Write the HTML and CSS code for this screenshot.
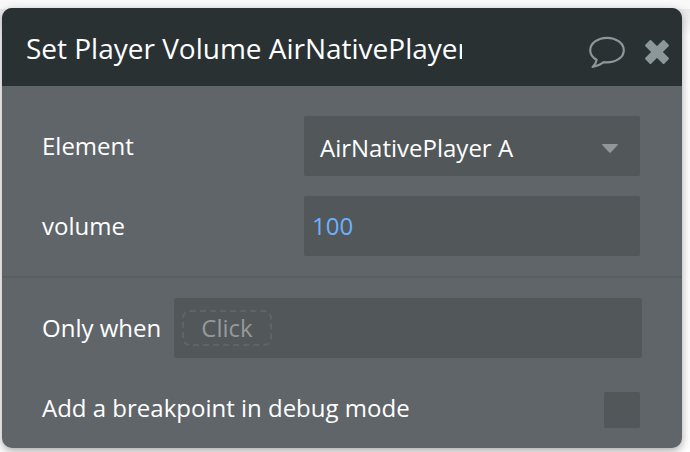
FILE: index.html
```html
<!DOCTYPE html>
<html lang="en">
<head>
  <meta charset="UTF-8" />
  <meta name="viewport" content="width=device-width, initial-scale=1" />
  <title>Set Player Volume</title>
  <link rel="stylesheet" href="styles.css">
</head>
<body>

  <div class="panel">
    <div class="header">
      <div class="title">Set Player Volume AirNativePlayer</div>
      <svg class="icon-comment" width="38" height="34" viewBox="0 0 38 34">
        <path d="M19 2.8C28.2 2.8 35.8 8.2 35.8 15.2S28.2 27.4 19 27.4C17.8 27.4 17 27.4 15.8 27.2C12.6 29.8 9 31.2 4.6 32C6.8 30 8.2 27.5 8.6 24.8C4.5 22.4 2.2 19 2.2 15.2C2.2 8.2 9.8 2.8 19 2.8Z" />
      </svg>
      <svg class="icon-close" width="26" height="26" viewBox="0 0 26 26">
        <g transform="rotate(45 13 13)">
          <rect x="0.6" y="9.9" width="24.8" height="6.2" />
          <rect x="9.9" y="0.6" width="6.2" height="24.8" />
        </g>
      </svg>
    </div>

    <div class="section">
      <div class="row">
        <label>Element</label>
        <div class="field dropdown">
          <span>AirNativePlayer A</span>
          <svg width="16" height="9" viewBox="0 0 16 9"><path d="M0.8 0H15.2Q16.4 0.2 15.5 1.2L9 8.2Q8 9.2 7 8.2L0.5 1.2Q-0.4 0.2 0.8 0Z" /></svg>
        </div>
      </div>
      <div class="row">
        <label>volume</label>
        <div class="field value">100</div>
      </div>
    </div>

    <div class="section conditions">
      <div class="row">
        <label>Only when</label>
        <div class="field expression"><span class="placeholder">Click</span></div>
      </div>
      <div class="row">
        <label>Add a breakpoint in debug mode</label>
        <div class="checkbox"></div>
      </div>
    </div>
  </div>

</body>
</html>
```
FILE: styles.css
```css
* {
  margin: 0;
  padding: 0;
  box-sizing: border-box;
}

body {
  height: 452px;
  padding: 8px 8px 4px 2px;
  overflow: hidden;
  font-family: "Open Sans", sans-serif;
  font-size: 24px;
  color: #fff;
  background: linear-gradient(#f9f9f9 9px, #e9e9e9 9px, #fff 36px);
}

.panel {
  height: 440px;
  border-radius: 10px;
  overflow: hidden;
  background-color: #606569;
  box-shadow: 0 3px 10px rgba(0, 0, 0, 0.35);
}

/* Header */
.header {
  display: flex;
  align-items: center;
  height: 78px;
  padding: 8px 12px 0 24px;
  background-color: #2a3133;
}

.title {
  width: 436px;
  height: 44px;
  margin-top: -2px;
  line-height: 40px;
  font-size: 28px;
  letter-spacing: -0.01px;
  white-space: nowrap;
  overflow: hidden;
}

.icon-comment {
  margin-top: 2px;
  margin-left: auto;
  fill: none;
  stroke: #8c9799;
  stroke-width: 2.2;
  stroke-linejoin: round;
}

.icon-close {
  margin-top: 1px;
  margin-left: 18px;
  fill: #8c9799;
  stroke: #8c9799;
  stroke-width: 2;
  stroke-linejoin: round;
}

/* Rows */
.section {
  display: flex;
  flex-direction: column;
  gap: 20px;
  padding: 30px 42px 20px 40px;
}

.conditions {
  border-top: 2px solid #595e61;
  padding-top: 20px;
}

.row {
  display: flex;
  align-items: center;
  justify-content: space-between;
  height: 60px;
}

.row label {
  margin-top: -2px;
}

.field {
  display: flex;
  align-items: center;
  width: 336px;
  height: 60px;
  border-radius: 2px;
  background-color: #525759;
}

.dropdown {
  justify-content: space-between;
  padding: 2px 22px 0 16px;
}

.dropdown svg {
  margin-top: 2px;
  fill: #919698;
}

.value {
  padding: 0 0 2px 8px;
  color: #6bb1ff;
}

.expression {
  width: 468px;
  margin-right: -2px;
  padding-left: 8px;
}

.placeholder {
  width: 90px;
  height: 36px;
  line-height: 32px;
  text-align: center;
  color: #96999a;
  border: 2px dashed #5f6467;
  border-radius: 8px;
}

.checkbox {
  width: 36px;
  height: 36px;
  margin-top: 4px;
  border-radius: 2px;
  background-color: #525759;
}
```
